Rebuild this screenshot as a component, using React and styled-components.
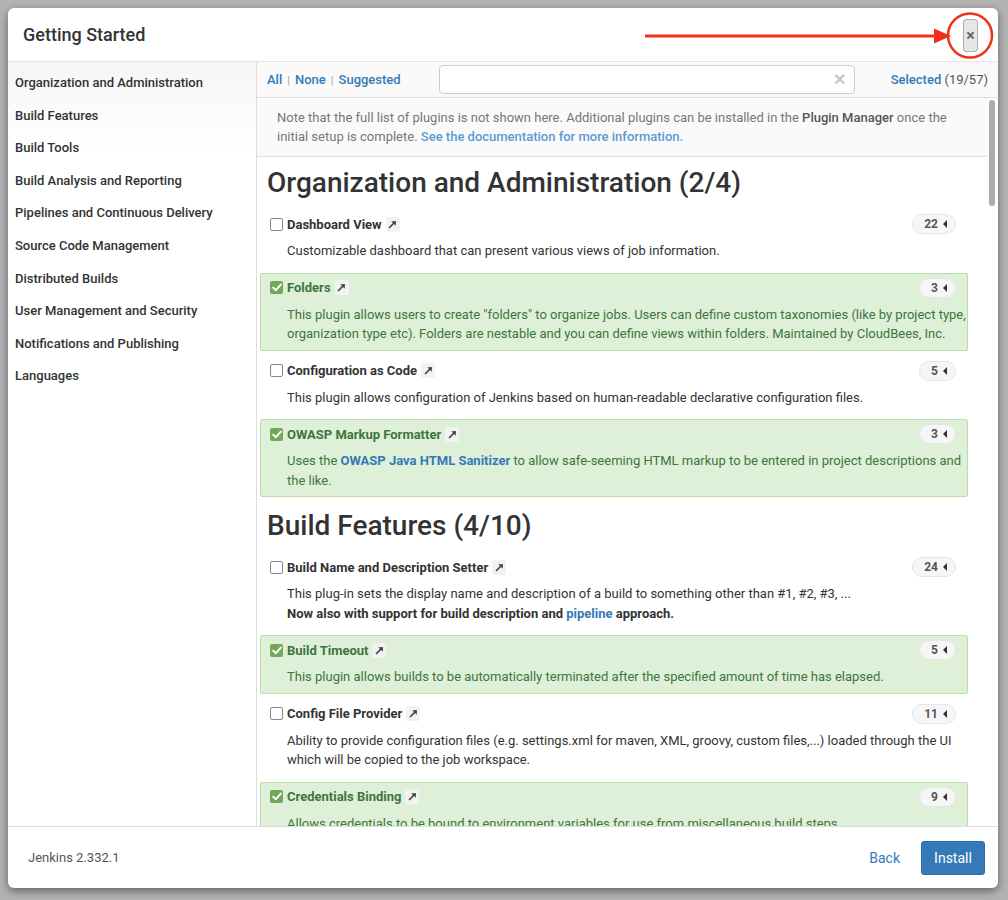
import React from "react";
import styled, { createGlobalStyle } from "styled-components";

const GlobalStyle = createGlobalStyle`
	html, body {
		margin: 0;
		padding: 0;
		background: #b3b3b3;
		font-family: Roboto, "Liberation Sans", Arial, sans-serif;
		color: #333;
	}
	* {
		box-sizing: border-box;
	}
`;

const Page = styled.div`
	width: 1008px;
	height: 900px;
	padding: 8px 10px 12px 8px;
	position: relative;
	overflow: hidden;
`;

const Dialog = styled.div`
	width: 990px;
	height: 880px;
	background: #fff;
	border-radius: 6px;
	box-shadow: 0 3px 9px rgba(0, 0, 0, 0.45);
	display: flex;
	flex-direction: column;
	overflow: hidden;
`;

// top bar with the title and the close button
const Header = styled.div`
	height: 54px;
	flex: 0 0 54px;
	display: flex;
	align-items: center;
	padding: 0 20px 0 15px;
	border-bottom: 1px solid #e5e5e5;
`;

const Title = styled.h1`
	margin: 0;
	font-size: 18px;
	font-weight: 500;
	color: #333;
	flex: 1;
`;

const CloseButton = styled.button`
	width: 15px;
	height: 33px;
	padding: 0;
	margin-top: 2px;
	border: 1px solid #aeaeae;
	border-radius: 3px;
	background: #e6e6e6;
	color: #666;
	font-family: inherit;
	font-size: 16px;
	font-weight: 700;
	line-height: 1;
	cursor: pointer;
`;

const Body = styled.div`
	flex: 1;
	display: flex;
	min-height: 0;
`;

const Sidebar = styled.nav`
	width: 249px;
	flex: 0 0 249px;
	padding: 5px 0 0 7px;
	border-right: 1px solid #ddd;
	background: linear-gradient(to bottom, #f6f6f6 0, #fff 90px);
`;

const SideItem = styled.a`
	display: block;
	height: 32.6px;
	line-height: 32px;
	font-size: 13px;
	font-weight: 500;
	color: #333;
	text-decoration: none;
`;

const Main = styled.div`
	flex: 1;
	display: flex;
	flex-direction: column;
	min-width: 0;
`;

const Toolbar = styled.div`
	height: 36px;
	flex: 0 0 36px;
	display: flex;
	align-items: center;
	padding: 0 10px 1px 10px;
	background: #fafafa;
	border-bottom: 1px solid #ddd;
`;

const Filters = styled.div`
	flex: 0 0 172px;
	font-size: 13px;
	font-weight: 500;
	color: #999;
`;

const FilterLink = styled.a`
	color: #337ab7;
	text-decoration: none;
`;

const Sep = styled.span`
	margin: 0 5px;
	font-size: 11px;
	color: #aaa;
`;

const Search = styled.div`
	width: 416px;
	height: 29px;
	border: 1px solid #ccc;
	border-radius: 4px;
	background: #fff;
	display: flex;
	align-items: center;
	justify-content: flex-end;
	padding-right: 8px;
	color: #c8c8c8;
	font-size: 16px;
	font-weight: 700;
`;

const Selected = styled.div`
	margin-left: auto;
	font-size: 13px;
	color: #555;
`;

const SelectedLink = styled.a`
	color: #337ab7;
	font-weight: 500;
	text-decoration: none;
`;

const ScrollRow = styled.div`
	flex: 1;
	display: flex;
	min-height: 0;
`;

const Content = styled.div`
	flex: 1;
	overflow: hidden;
	min-width: 0;
`;

const ScrollTrack = styled.div`
	width: 11px;
	flex: 0 0 11px;
	padding: 2px 3px 0 2px;
`;

const ScrollThumb = styled.div`
	height: 106px;
	border-radius: 4px;
	background: #acacac;
`;

const Note = styled.p`
	margin: 0 0 2px;
	padding: 10px 20px;
	font-size: 13px;
	line-height: 19px;
	color: #777;
	background: #fafafa;
	border-bottom: 1px solid #ddd;
	b {
		color: #555;
		font-weight: 500;
	}
	a {
		color: #5a9bd3;
		font-weight: 500;
		text-decoration: none;
	}
`;

const List = styled.div`
	padding: 0 19px 0 3px;
`;

const Section = styled.section`
	display: flow-root;
`;

const SectionTitle = styled.h2`
	margin: 7px 0 9px;
	padding-left: 7px;
	font-size: 28px;
	line-height: 34px;
	font-weight: 500;
	color: #333;
`;

const Plugin = styled.div`
	margin-bottom: 5px;
	padding: 3px 1px 6px 9px;
	border: 1px solid ${(p) => (p.$on ? "#b9dea8" : "transparent")};
	border-radius: 2px;
	background: ${(p) => (p.$on ? "#dff0d8" : "transparent")};
	color: ${(p) => (p.$on ? "#3c763d" : "#333")};
`;

const PluginHead = styled.div`
	height: 22px;
	display: flex;
	align-items: center;
`;

const Check = styled.span`
	width: 13px;
	height: 13px;
	flex: 0 0 13px;
	border-radius: 2px;
	border: ${(p) => (p.$on ? "none" : "1.5px solid #858594")};
	background: ${(p) => (p.$on ? "#71a85a" : "#fff")};
	display: flex;
	align-items: center;
	justify-content: center;
`;

const Name = styled.span`
	margin-left: 4px;
	font-size: 13px;
	font-weight: 700;
`;

const Ext = styled.span`
	margin-left: 4px;
	width: 14px;
	height: 15px;
	border-radius: 2px;
	background: #f2f2f2;
	display: inline-flex;
	align-items: center;
	justify-content: center;
`;

const Badge = styled.span`
	margin-left: auto;
	margin-right: 10px;
	height: 20px;
	padding: 0 8px 0 11px;
	border: 1px solid #e6e6e6;
	border-radius: 10px;
	background: #f6f6f6;
	display: flex;
	align-items: center;
	gap: 5px;
	font-size: 12px;
	font-weight: 700;
	color: #555;
`;

const Caret = styled.span`
	width: 0;
	height: 0;
	border-top: 4px solid transparent;
	border-bottom: 4px solid transparent;
	border-right: 4px solid #333;
`;

const Desc = styled.div`
	margin-top: 6px;
	padding-left: 17px;
	font-size: 13px;
	line-height: 19.5px;
	b {
		font-weight: 700;
	}
	a {
		color: #337ab7;
		text-decoration: none;
	}
`;

const Footer = styled.div`
	height: 62px;
	flex: 0 0 62px;
	display: flex;
	align-items: center;
	padding: 0 13px 0 20px;
	border-top: 1px solid #ddd;
`;

const Version = styled.span`
	font-size: 13px;
	color: #555;
	flex: 1;
`;

const BackLink = styled.a`
	font-size: 14px;
	color: #337ab7;
	text-decoration: none;
	margin-right: 21px;
`;

const InstallButton = styled.button`
	width: 64px;
	height: 34px;
	border: 1px solid #2e6da4;
	border-radius: 3px;
	background: #337ab7;
	color: #fff;
	font-family: inherit;
	font-size: 14px;
	cursor: pointer;
`;

// red annotation drawn on top of the screenshot
const Annotation = styled.svg`
	position: absolute;
	left: 0;
	top: 0;
	pointer-events: none;
`;

const categories = [
	"Organization and Administration",
	"Build Features",
	"Build Tools",
	"Build Analysis and Reporting",
	"Pipelines and Continuous Delivery",
	"Source Code Management",
	"Distributed Builds",
	"User Management and Security",
	"Notifications and Publishing",
	"Languages",
];

const sections = [
	{
		title: "Organization and Administration (2/4)",
		plugins: [
			{
				name: "Dashboard View",
				deps: 22,
				desc: "Customizable dashboard that can present various views of job information.",
			},
			{
				name: "Folders",
				deps: 3,
				on: true,
				desc: 'This plugin allows users to create "folders" to organize jobs. Users can define custom taxonomies (like by project type, organization type etc). Folders are nestable and you can define views within folders. Maintained by CloudBees, Inc.',
			},
			{
				name: "Configuration as Code",
				deps: 5,
				desc: "This plugin allows configuration of Jenkins based on human-readable declarative configuration files.",
			},
			{
				name: "OWASP Markup Formatter",
				deps: 3,
				on: true,
				desc: (
					<>
						Uses the <a href="#"><b>OWASP Java HTML Sanitizer</b></a> to allow safe-seeming HTML markup to be
						entered in project descriptions and the like.
					</>
				),
			},
		],
	},
	{
		title: "Build Features (4/10)",
		plugins: [
			{
				name: "Build Name and Description Setter",
				deps: 24,
				desc: (
					<>
						This plug-in sets the display name and description of a build to something other than #1, #2, #3, ...
						<br />
						<b>
							Now also with support for build description and <a href="#">pipeline</a> approach.
						</b>
					</>
				),
			},
			{
				name: "Build Timeout",
				deps: 5,
				on: true,
				desc: "This plugin allows builds to be automatically terminated after the specified amount of time has elapsed.",
			},
			{
				name: "Config File Provider",
				deps: 11,
				desc: "Ability to provide configuration files (e.g. settings.xml for maven, XML, groovy, custom files,...) loaded through the UI which will be copied to the job workspace.",
			},
			{
				name: "Credentials Binding",
				deps: 9,
				on: true,
				desc: "Allows credentials to be bound to environment variables for use from miscellaneous build steps.",
			},
		],
	},
];

const CheckMark = () => (
	<svg width="10" height="9" viewBox="0 0 10 9">
		<path d="M1.2 4.6 L3.9 7.2 L8.8 1.6" fill="none" stroke="#fff" strokeWidth="2" strokeLinecap="round" strokeLinejoin="round" />
	</svg>
);

const ExtIcon = () => (
	<svg width="9" height="9" viewBox="0 0 9 9">
		<path d="M1.5 7.5 L7 2" stroke="#444" strokeWidth="1.7" strokeLinecap="round" />
		<path d="M3.2 1.2 H7.8 V5.8 Z" fill="#444" />
	</svg>
);

const PluginRow = ({ plugin }) => (
	<Plugin $on={plugin.on}>
		<PluginHead>
			<Check $on={plugin.on}>{plugin.on && <CheckMark />}</Check>
			<Name>{plugin.name}</Name>
			<Ext>
				<ExtIcon />
			</Ext>
			<Badge>
				{plugin.deps}
				<Caret />
			</Badge>
		</PluginHead>
		<Desc>{plugin.desc}</Desc>
	</Plugin>
);

export default function App() {
	return (
		<>
			<GlobalStyle />
			<Page>
				<Dialog>
					<Header>
						<Title>Getting Started</Title>
						<CloseButton aria-label="close">×</CloseButton>
					</Header>
					<Body>
						<Sidebar>
							{categories.map((c) => (
								<SideItem key={c} href="#">
									{c}
								</SideItem>
							))}
						</Sidebar>
						<Main>
							<Toolbar>
								<Filters>
									<FilterLink href="#">All</FilterLink>
									<Sep>|</Sep>
									<FilterLink href="#">None</FilterLink>
									<Sep>|</Sep>
									<FilterLink href="#">Suggested</FilterLink>
								</Filters>
								<Search>✕</Search>
								<Selected>
									<SelectedLink href="#">Selected</SelectedLink> (19/57)
								</Selected>
							</Toolbar>
							<ScrollRow>
								<Content>
									<Note>
										Note that the full list of plugins is not shown here. Additional plugins can be installed in the{" "}
										<b>Plugin Manager</b> once the initial setup is complete.{" "}
										<a href="#">See the documentation for more information.</a>
									</Note>
									<List>
										{sections.map((s) => (
											<Section key={s.title}>
												<SectionTitle>{s.title}</SectionTitle>
												{s.plugins.map((p) => (
													<PluginRow key={p.name} plugin={p} />
												))}
											</Section>
										))}
									</List>
								</Content>
								<ScrollTrack>
									<ScrollThumb />
								</ScrollTrack>
							</ScrollRow>
						</Main>
					</Body>
					<Footer>
						<Version>Jenkins 2.332.1</Version>
						<BackLink href="#">Back</BackLink>
						<InstallButton>Install</InstallButton>
					</Footer>
				</Dialog>
				<Annotation width="1008" height="900" viewBox="0 0 1008 900">
					<line x1="645" y1="36" x2="937" y2="36" stroke="#f2301a" strokeWidth="3" />
					<polygon points="934,28.5 951,36 934,43.5" fill="#f2301a" />
					<circle cx="970" cy="35.5" r="22" fill="none" stroke="#f2301a" strokeWidth="2.5" />
				</Annotation>
			</Page>
		</>
	);
}
